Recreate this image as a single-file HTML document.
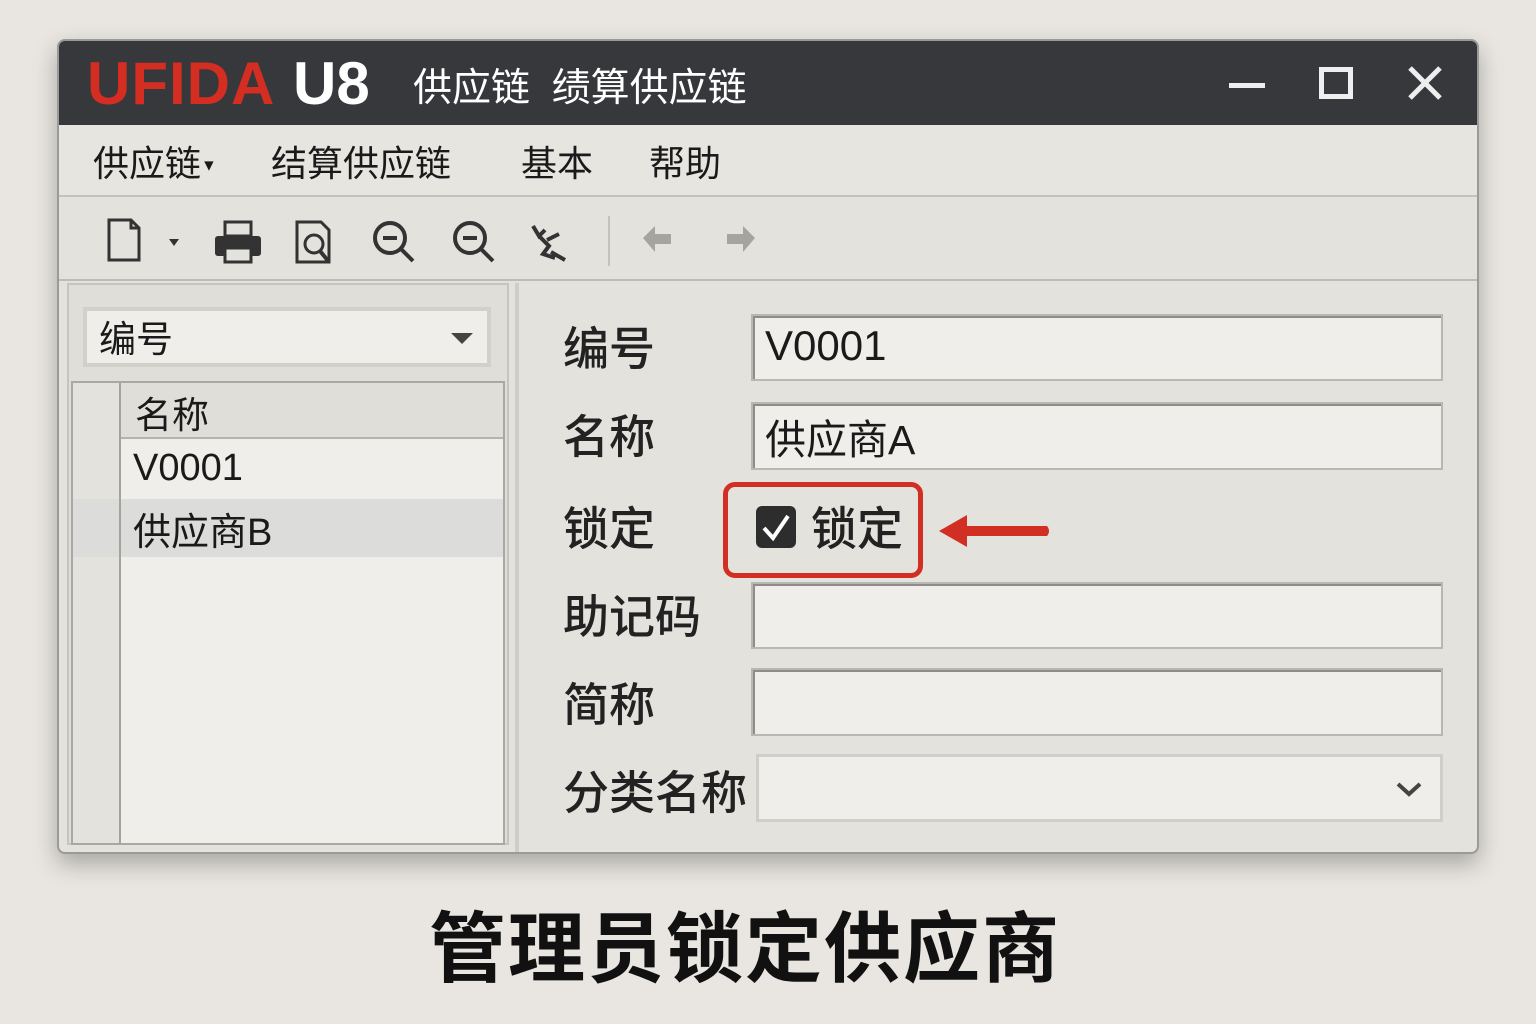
<!DOCTYPE html>
<html><head><meta charset="utf-8"><style>
*{margin:0;padding:0;box-sizing:border-box}
body{width:1536px;height:1024px;background:#e9e6e1;font-family:"Liberation Sans","Noto Sans CJK SC",sans-serif;position:relative;overflow:hidden;color:#1a1a1a}
.abs{position:absolute}
.win{left:57px;top:39px;width:1422px;height:815px;background:#e4e2dd;border:2px solid #9a9a98;border-radius:8px;box-shadow:0 10px 24px rgba(0,0,0,.28);overflow:hidden}
.title{left:0;top:0;width:100%;height:84px;background:#36383b}
.menu{left:0;top:84px;width:100%;height:72px;background:#e7e5e0;border-bottom:2px solid #c3c1bc}
.tool{left:0;top:157px;width:100%;height:83px;background:#e4e2dd;border-bottom:2px solid #bebcb7}
.input{background:#efeeea;border:2px solid #b9b7b2;box-shadow:inset 2px 2px 0 #8f8d89}
.lbl{font-size:46px;font-weight:500;color:#222}
</style></head><body>
<div class="abs win">
 <div class="abs title">
  <div class="abs" style="left:28px;top:8px;font-size:60px;font-weight:bold;color:#d42d22;letter-spacing:1px">UFIDA</div>
  <div class="abs" style="left:234px;top:8px;font-size:60px;font-weight:bold;color:#fff">U8</div>
  <div class="abs" style="left:354px;top:16px;font-size:39px;color:#fff">供应链&nbsp;&nbsp;绩算供应链</div>
  <div class="abs" style="left:1170px;top:42px;width:36px;height:5px;background:#eee"></div>
  <div class="abs" style="left:1260px;top:26px;width:34px;height:32px;border:5px solid #eee"></div>
  <svg class="abs" style="left:1348px;top:24px" width="36" height="36"><path d="M3 3L33 33M33 3L3 33" stroke="#eee" stroke-width="5"/></svg>
 </div>
 <div class="abs menu">
  <div class="abs" style="left:34px;top:10px;font-size:36px">供应链<span style="font-size:16px;vertical-align:middle">▼</span></div>
  <div class="abs" style="left:212px;top:10px;font-size:36px">结算供应链</div>
  <div class="abs" style="left:462px;top:10px;font-size:36px">基本</div>
  <div class="abs" style="left:590px;top:10px;font-size:36px">帮助</div>
 </div>
 <div class="abs tool">
  <svg class="abs" style="left:40px;top:18px" width="720" height="50">
   <path d="M10 4H32L40 12V44H10Z M32 4V12H40" fill="none" stroke="#333" stroke-width="3"/>
   <path d="M70 23L80 23L75 30Z" fill="#333"/>
   <rect x="116" y="20" width="46" height="20" rx="3" fill="#333"/><rect x="126" y="6" width="26" height="14" fill="none" stroke="#333" stroke-width="3"/><rect x="126" y="32" width="26" height="14" fill="#e4e2dd" stroke="#333" stroke-width="3"/>
   <path d="M198 6H222L230 14V46H198Z" fill="none" stroke="#333" stroke-width="3"/><circle cx="215" cy="28" r="9" fill="none" stroke="#333" stroke-width="3"/><path d="M221 35L230 46" stroke="#333" stroke-width="4"/>
   <circle cx="291" cy="22" r="15" fill="none" stroke="#333" stroke-width="4"/><path d="M284 22H298M302 33L314 45" stroke="#333" stroke-width="4"/>
   <circle cx="371" cy="22" r="15" fill="none" stroke="#333" stroke-width="4"/><path d="M364 22H378M382 33L394 45" stroke="#333" stroke-width="4"/>
   <path d="M434 10L440 20L446 14M440 20L450 30L444 38L456 42M448 24L460 18M452 36L466 44" fill="none" stroke="#333" stroke-width="4"/>
   <path d="M510 0V58" stroke="#c3c1bc" stroke-width="2"/>
   <path d="M544 22L556 10V18H572V28H556V36Z" fill="#a5a4a1"/>
   <path d="M656 22L644 10V18H628V28H644V36Z" fill="#a5a4a1"/>
  </svg>
 </div>
 <div class="abs" style="left:8px;top:242px;width:442px;height:562px;background:#e0ded9;border:2px solid #c6c4bf">
  <div class="abs input" style="left:14px;top:22px;width:408px;height:60px;box-shadow:none;border:4px solid #d2d0cb;background:#efeeea">
   <div class="abs" style="left:12px;top:-2px;font-size:37px">编号</div>
   <svg class="abs" style="left:364px;top:22px" width="22" height="12"><path d="M0 0H22L11 11Z" fill="#444"/></svg>
  </div>
  <div class="abs" style="left:2px;top:96px;width:434px;height:464px;background:#efeeea;border:2px solid #aaa8a4">
   <div class="abs" style="left:0;top:0;width:100%;height:56px;background:#e0ded9;border-bottom:2px solid #b5b3ae"></div>
   <div class="abs" style="left:0;top:0;width:48px;height:100%;background:#e4e2dd;border-right:2px solid #a5a3a0"></div>
   <div class="abs" style="left:0;top:116px;width:100%;height:58px;background:#dcdcdb"></div>
   <div class="abs" style="left:46px;top:0;width:2px;height:100%;background:#a5a3a0"></div>
   <div class="abs" style="left:62px;top:2px;font-size:37px">名称</div>
   <div class="abs" style="left:60px;top:64px;font-size:38px">V0001</div>
   <div class="abs" style="left:60px;top:118px;font-size:38px">供应商B</div>
  </div>
 </div>
 <div class="abs" style="left:456px;top:242px;width:4px;height:572px;background:#cfcdc8"></div>
 <div class="abs lbl" style="left:504px;top:272px">编号</div>
 <div class="abs input" style="left:692px;top:273px;width:692px;height:67px"><div class="abs" style="left:12px;top:6px;font-size:42px">V0001</div></div>
 <div class="abs lbl" style="left:504px;top:360px">名称</div>
 <div class="abs input" style="left:692px;top:361px;width:692px;height:68px"><div class="abs" style="left:12px;top:2px;font-size:41px">供应商A</div></div>
 <div class="abs lbl" style="left:504px;top:452px">锁定</div>
 <div class="abs" style="left:664px;top:441px;width:200px;height:96px;border:5px solid #d22f24;border-radius:12px"></div>
 <svg class="abs" style="left:695px;top:463px" width="44" height="46"><rect x="2" y="2" width="40" height="42" rx="6" fill="#2d2d2d"/><path d="M10 24L19 34L34 12" fill="none" stroke="#fff" stroke-width="4"/></svg>
 <div class="abs lbl" style="left:752px;top:452px">锁定</div>
 <svg class="abs" style="left:876px;top:470px" width="120" height="40"><path d="M4 20L32 4V15H112Q116 20 112 25H32V36Z" fill="#d22f24"/></svg>
 <div class="abs lbl" style="left:504px;top:540px">助记码</div>
 <div class="abs input" style="left:692px;top:541px;width:692px;height:67px"></div>
 <div class="abs lbl" style="left:504px;top:628px">简称</div>
 <div class="abs input" style="left:692px;top:627px;width:692px;height:68px"></div>
 <div class="abs lbl" style="left:504px;top:716px">分类名称</div>
 <div class="abs input" style="left:697px;top:713px;width:687px;height:68px;box-shadow:none;border:3px solid #d0ceca">
  <svg class="abs" style="left:636px;top:24px" width="28" height="16"><path d="M3 3L14 13L25 3" fill="none" stroke="#444" stroke-width="4"/></svg>
 </div>
</div>
<div class="abs" style="left:0;width:1490px;top:888px;text-align:center;font-size:77px;font-weight:bold;color:#111;letter-spacing:2px">管理员锁定供应商</div>
</body></html>
